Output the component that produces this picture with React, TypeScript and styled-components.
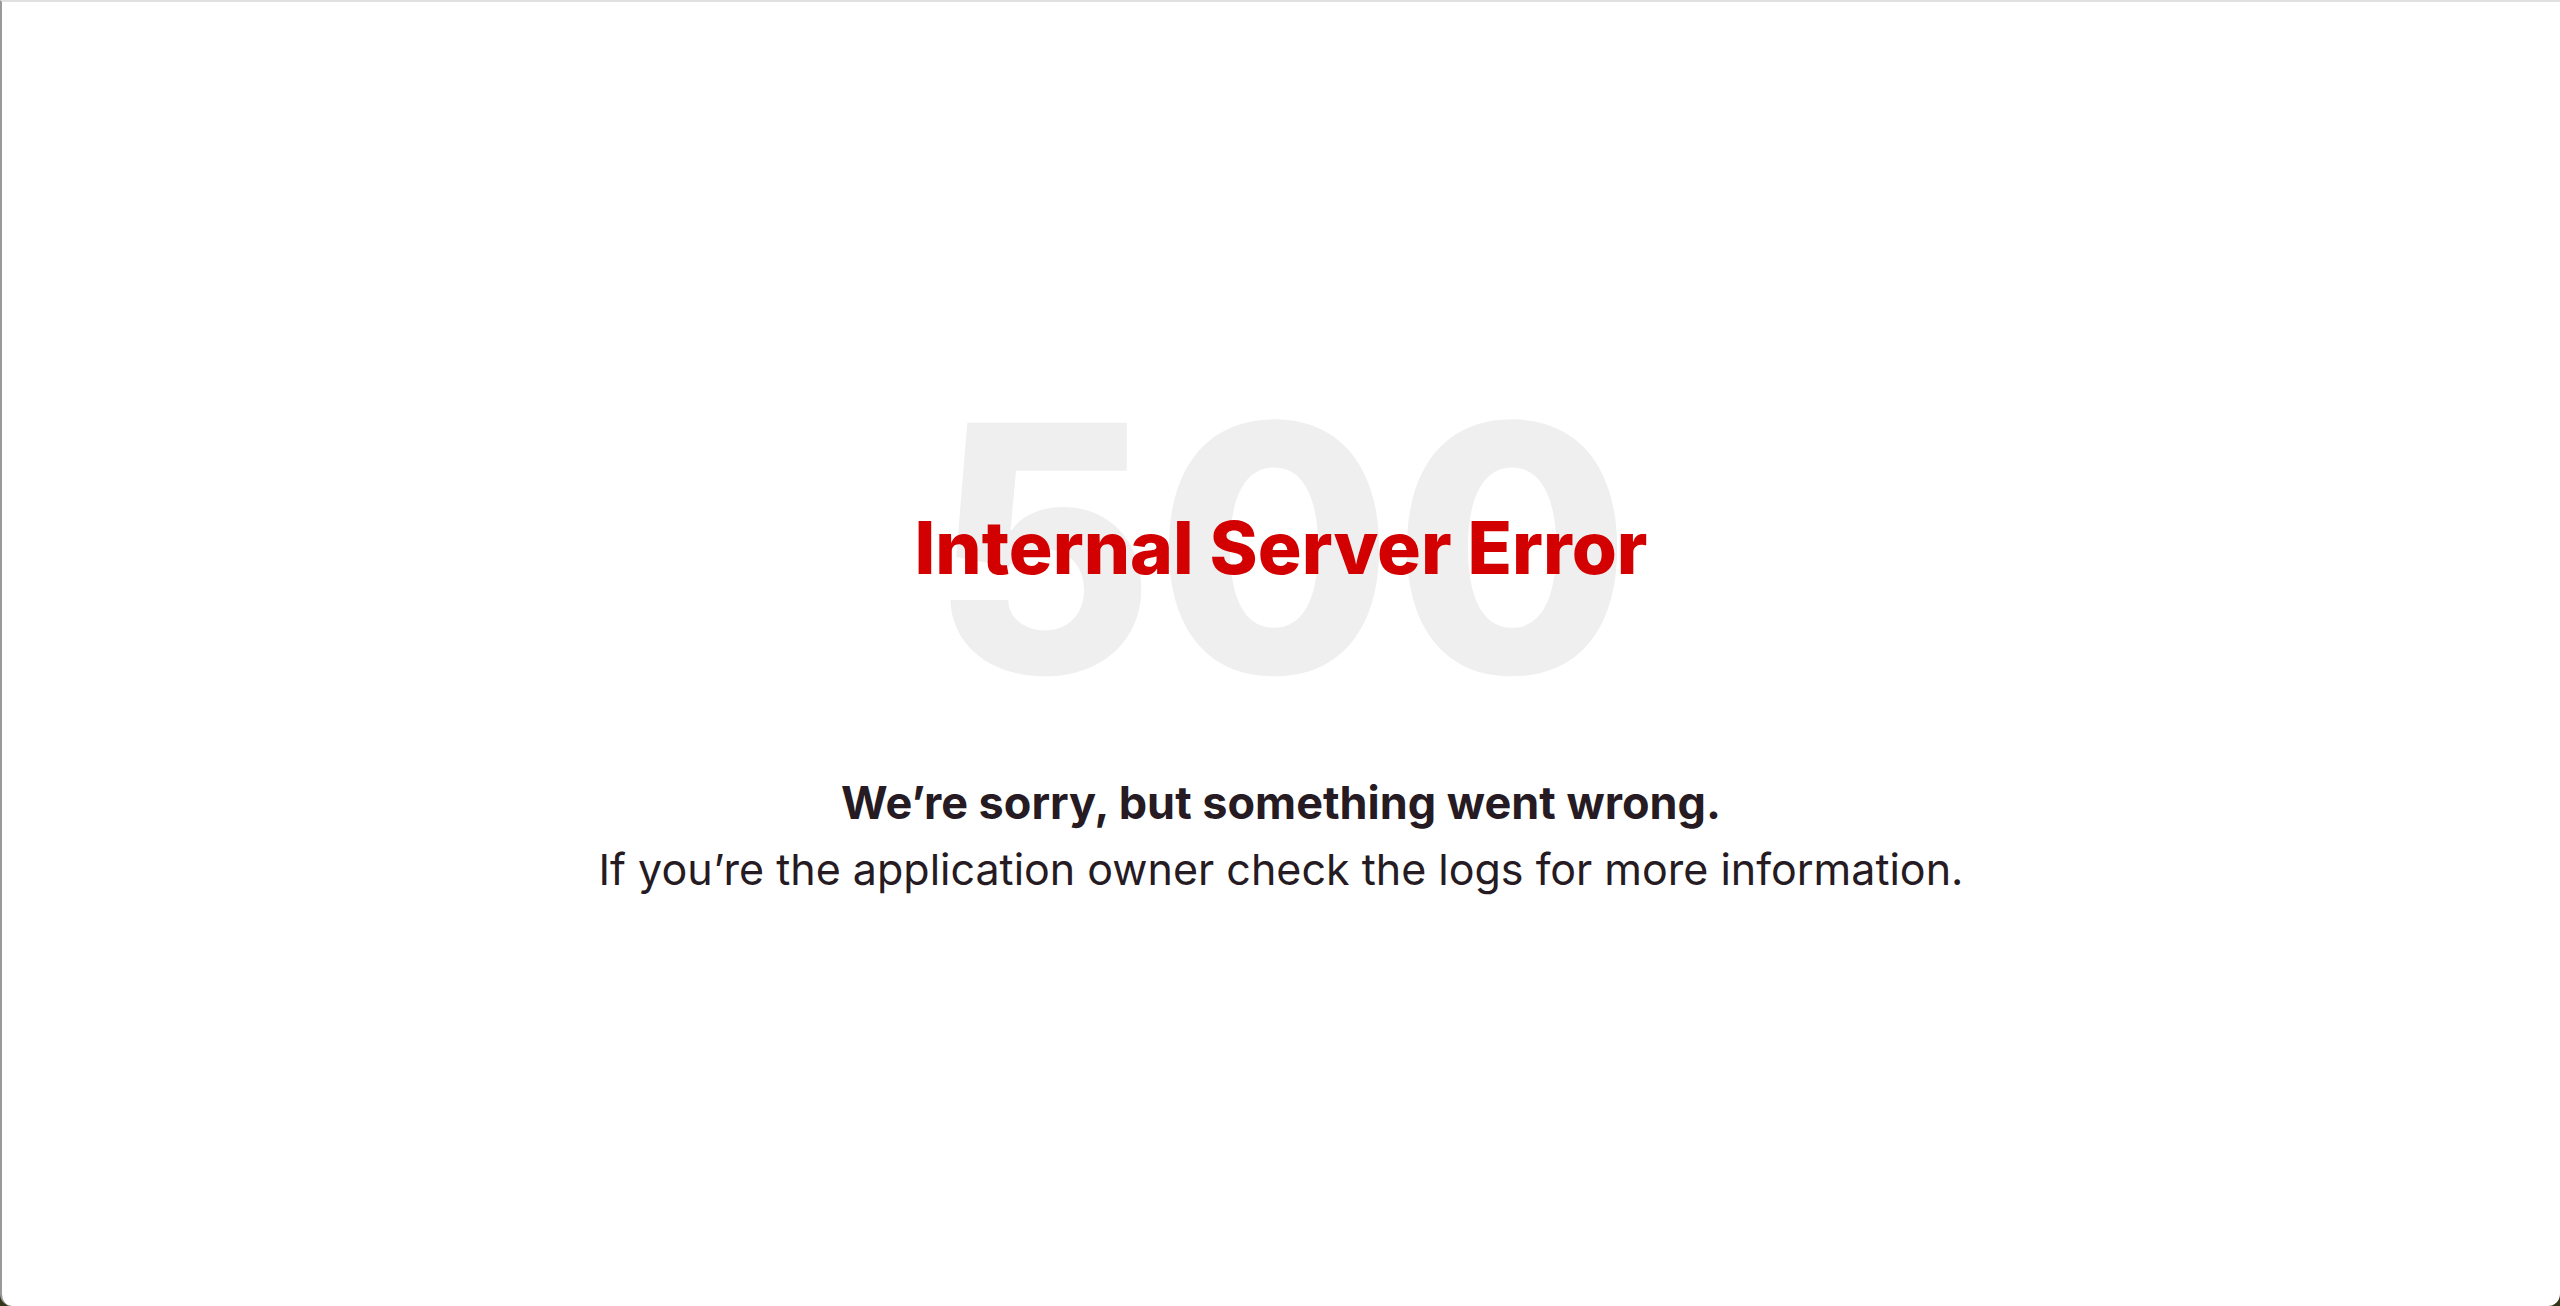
import React from "react";
import styled, { createGlobalStyle } from "styled-components";

const GlobalStyle = createGlobalStyle`
  *, *::before, *::after {
    box-sizing: border-box;
  }

  body {
    margin: 0;
    background: #35351a;
    color: #261b23;
    font-family: Inter, "Liberation Sans", sans-serif;
  }
`;

const Page = styled.main`
  display: flex;
  flex-direction: column;
  align-items: center;
  justify-content: center;
  gap: 80px;
  min-height: 100vh;
  padding: 0 24px;
  background: #fff;
  border-top: 2px solid #e0e0e0;
  border-left: 2px solid #999;
  border-radius: 0 0 12px 12px;
  text-align: center;
`;

/* The status code and the title share one cell, the title in front. */
const Banner = styled.header`
  display: grid;
  place-items: center;

  > * {
    grid-area: 1 / 1;
    margin: 0;
  }
`;

const StatusCode = styled.p`
  color: #efefef;
  font-size: 344px;
  font-weight: 800;
  line-height: 284px;
`;

const Title = styled.h1`
  color: #d30001;
  font-size: 73px;
  font-weight: 800;
  line-height: 88px;
`;

const Message = styled.div`
  line-height: 66px;
`;

const Lead = styled.p`
  margin: 0;
  font-size: 45px;
  font-weight: 700;
`;

const Hint = styled.p`
  margin: 0;
  font-size: 43px;
  font-weight: 400;
`;

export default function App() {
  return (
    <>
      <GlobalStyle />
      <Page>
        <Banner>
          <StatusCode>500</StatusCode>
          <Title>Internal Server Error</Title>
        </Banner>
        <Message>
          <Lead>We’re sorry, but something went wrong.</Lead>
          <Hint>If you’re the application owner check the logs for more information.</Hint>
        </Message>
      </Page>
    </>
  );
}
